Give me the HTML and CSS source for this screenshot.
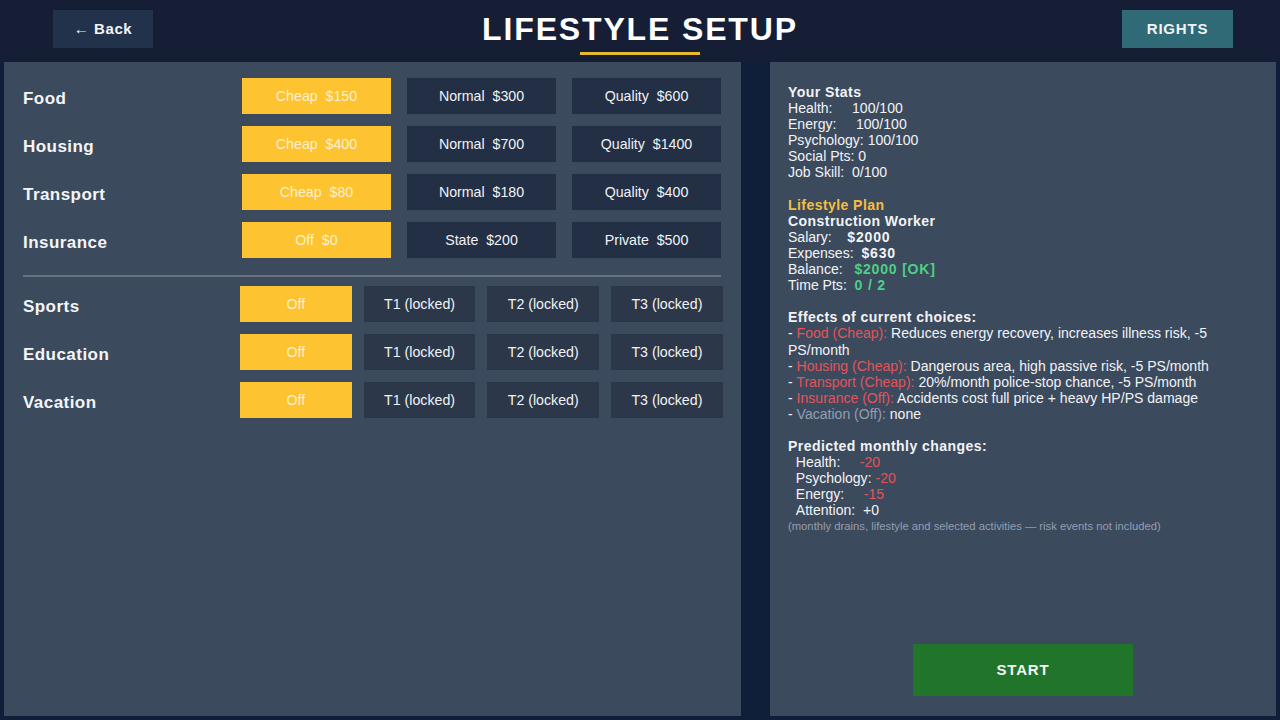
FILE: index.html
```html
<!DOCTYPE html>
<html lang="en">
<head>
<meta charset="utf-8">
<title>Lifestyle Setup</title>
<link rel="stylesheet" href="styles.css">
</head>
<body>
<header class="topbar">
  <div class="top-left"><button class="btn-back"><span class="arrow">←</span> Back</button></div>
  <div class="title-block">
    <h1 class="title">LIFESTYLE SETUP</h1>
    <div class="title-bar"></div>
  </div>
  <div class="top-right"><button class="btn-rights">RIGHTS</button></div>
</header>
<main class="content">
  <section class="panel panel-left">
    <div class="rows">
      <div class="row row-core"><div class="label">Food</div><button class="opt on">Cheap  $150</button><button class="opt">Normal  $300</button><button class="opt">Quality  $600</button></div>
      <div class="row row-core"><div class="label">Housing</div><button class="opt on">Cheap  $400</button><button class="opt">Normal  $700</button><button class="opt">Quality  $1400</button></div>
      <div class="row row-core"><div class="label">Transport</div><button class="opt on">Cheap  $80</button><button class="opt">Normal  $180</button><button class="opt">Quality  $400</button></div>
      <div class="row row-core"><div class="label">Insurance</div><button class="opt on">Off  $0</button><button class="opt">State  $200</button><button class="opt">Private  $500</button></div>
    </div>
    <div class="divider"></div>
    <div class="rows">
      <div class="row row-act"><div class="label">Sports</div><button class="opt on">Off</button><button class="opt locked">T1 (locked)</button><button class="opt locked">T2 (locked)</button><button class="opt locked">T3 (locked)</button></div>
      <div class="row row-act"><div class="label">Education</div><button class="opt on">Off</button><button class="opt locked">T1 (locked)</button><button class="opt locked">T2 (locked)</button><button class="opt locked">T3 (locked)</button></div>
      <div class="row row-act"><div class="label">Vacation</div><button class="opt on">Off</button><button class="opt locked">T1 (locked)</button><button class="opt locked">T2 (locked)</button><button class="opt locked">T3 (locked)</button></div>
    </div>
  </section>
  <aside class="panel panel-right">
    <div class="summary">
      <div class="group"><div class="b">Your Stats</div><div>Health:     100/100</div><div>Energy:     100/100</div><div>Psychology: 100/100</div><div>Social Pts: 0</div><div>Job Skill:  0/100</div></div>
      <div class="group"><div class="b gold">Lifestyle Plan</div><div class="b">Construction Worker</div><div>Salary:    <span class="val">$2000</span></div><div>Expenses:  <span class="val">$630</span></div><div>Balance:   <span class="val green">$2000 [OK]</span></div><div>Time Pts:  <span class="val green">0 / 2</span></div></div>
      <div class="group"><div class="b">Effects of current choices:</div><div>- <span class="red">Food (Cheap):</span> Reduces energy recovery, increases illness risk, -5 PS/month</div><div>- <span class="red">Housing (Cheap):</span> Dangerous area, high passive risk, -5 PS/month</div><div>- <span class="red">Transport (Cheap):</span> 20%/month police-stop chance, -5 PS/month</div><div>- <span class="red">Insurance (Off):</span> Accidents cost full price + heavy HP/PS damage</div><div>- <span class="muted">Vacation (Off):</span> none</div></div>
      <div class="group"><div class="b">Predicted monthly changes:</div><div>  Health:     <span class="red">-20</span></div><div>  Psychology: <span class="red">-20</span></div><div>  Energy:     <span class="red">-15</span></div><div>  Attention:  +0</div><div class="note">(monthly drains, lifestyle and selected activities — risk events not included)</div></div>
    </div>
    <button class="btn-start">START</button>
  </aside>
</main>
</body>
</html>
```

FILE: styles.css
```css
* { box-sizing: border-box; }
html, body { margin: 0; height: 100%; }
body {
  width: 1280px;
  height: 720px;
  overflow: hidden;
  background: #0f1f39;
  font-family: "Liberation Sans", Arial, sans-serif;
  color: #f2f3f5;
  display: flex;
  flex-direction: column;
}
button { font-family: inherit; border: 0; margin: 0; padding: 0; cursor: pointer; white-space: pre; }

.topbar {
  height: 62px;
  flex: none;
  background: #161e36;
  display: grid;
  grid-template-columns: 1fr auto 1fr;
  padding: 10px 47px 0 53px;
}
.top-right { display: flex; justify-content: flex-end; }
.btn-back {
  width: 100px; height: 38px;
  background: #22324b;
  color: #f2f3f5;
  font-size: 15px; font-weight: 700; letter-spacing: 0.6px;
  padding-bottom: 2px;
}
.arrow { font-weight: 400; }
.btn-rights {
  width: 111px; height: 38px;
  background: #2f6a76;
  color: #f2f3f5;
  font-size: 15px; font-weight: 700; letter-spacing: 0.8px;
  padding-bottom: 2px;
}
.title-block { display: flex; flex-direction: column; align-items: center; margin-right: 6px; }
.title {
  margin: 0;
  font-size: 32px; line-height: 38px; font-weight: 700; letter-spacing: 1.85px;
  color: #fff;
}
.title-bar { width: 120px; height: 3px; margin-top: 4px; background: #e6b92e; }

.content {
  flex: none;
  height: 654px;
  display: flex;
  padding: 0 4px;
  gap: 29px;
}
.panel { background: #3c4a5e; height: 654px; }
.panel-left { width: 737px; padding: 16px 17px 0 19px; }
.panel-right { width: 506px; padding: 22px 18px 0; display: flex; flex-direction: column; }

.rows { display: flex; flex-direction: column; gap: 12px; }
.row { display: flex; height: 36px; }
.label {
  font-size: 17px; font-weight: 700; letter-spacing: 0.45px; line-height: 42px;
  color: #f4f5f7;
}
.row-core { gap: 16px; }
.row-core .label { width: 203px; }
.row-core .opt { width: 149px; }
.row-act { gap: 12px; }
.row-act .label { width: 205px; }
.row-act .opt { width: 111.7px; }
.opt {
  height: 36px;
  font-size: 14.2px;
  background: #232f45;
  color: #f0f2f5;
}
.opt.locked { background: #2c3849; }
.opt.on { background: #fdc331; color: #fdf1cf; }
.divider { height: 2px; margin: 17px 0 9px; width: 698px; background: #66707f; }

.summary { font-size: 14.05px; line-height: 16.1px; flex: 1; }
.group { margin-bottom: 16.1px; white-space: pre-wrap; }
.b { font-weight: 700; letter-spacing: 0.42px; }
.val { font-weight: 700; letter-spacing: 0.8px; }
.gold { color: #f5bf3d; }
.green { color: #4dd083; }
.red { color: #e2545a; }
.muted { color: #939eb0; }
.note { font-size: 11.25px; line-height: 14px; color: #939eb0; }
.btn-start {
  align-self: center;
  width: 220px; height: 52px;
  margin: 0 0 20px 0;
  background: #20752a;
  color: #f4f5f7;
  font-size: 15px; font-weight: 700; letter-spacing: 0.8px;
  padding-bottom: 2px;
}
```
